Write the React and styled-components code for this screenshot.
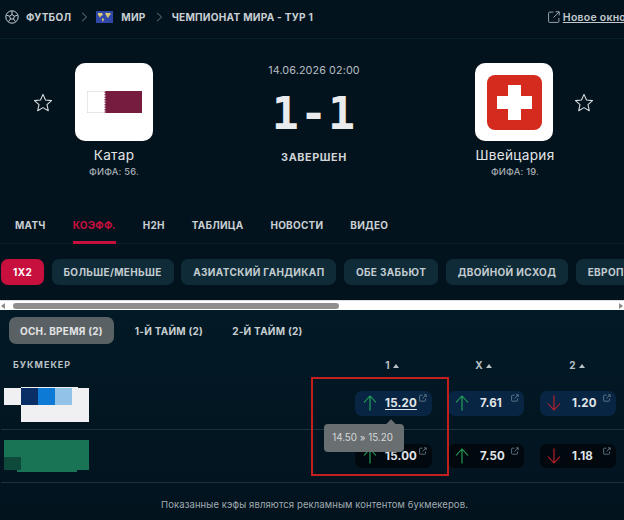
import React from "react";
import styled, { createGlobalStyle } from "styled-components";

const Global = createGlobalStyle`
  html, body { margin: 0; padding: 0; background: #02131e; }
  body { font-family: Inter, "Noto Sans", sans-serif; }
  * { box-sizing: border-box; }
`;
const Page = styled.div`
  position: relative; width: 624px; height: 520px; overflow: hidden;
  background: #02131e; color: #dfe3e6; font-family: Inter, "Noto Sans", sans-serif;
`;
const Breadcrumbs = styled.div`
  height: 39px; display: flex; align-items: center; padding: 0 0 4px 5px;
  border-bottom: 1px solid #07202c; font-size: 10.1px; font-weight: 700; letter-spacing: .25px; color: #c9cfd3; white-space: nowrap;
`;
const Crumb = styled.span`margin-left: ${p => p.$ml}px; display: flex;`;
const NewWindow = styled.a`
  margin-left: auto; display: flex; align-items: center; gap: 3px; color: #c3cace; font-size: 10.5px; font-weight: 600; margin-right: -2px;
  span { text-decoration: underline; }
`;
const Match = styled.section`
  height: 156px; display: grid; grid-template-columns: 236px 156px 232px; padding-top: 24px;
`;
const Side = styled.div`display: flex; flex-direction: column; align-items: flex-start; position: relative;`;
const TeamRow = styled.div`display: flex; align-items: center; gap: ${p => p.$right ? "21px" : "22px"}; padding-left: ${p => p.$right ? "83px" : "33px"};`;
const Logo = styled.div`
  width: 78px; height: 78px; border-radius: 10px; background: #fff; display: flex; align-items: center; justify-content: center;
`;
const TeamInfo = styled.div`
  width: 100px; margin-left: ${p => p.$ml}px; margin-top: 6px; text-align: center;
`;
const TeamName = styled.div`font-size: 13.6px; font-weight: 400; letter-spacing: .3px; line-height: 17px; color: #e2e5e7;`;
const Fifa = styled.div`font-size: 9.3px; font-weight: 500; line-height: 13px; margin-top: 1px; color: #a7aeb3; letter-spacing: .2px;`;
const Center = styled.div`display: flex; flex-direction: column; align-items: center; margin-top: 1px; width: 156px;`;
const DateText = styled.div`font-size: 10.8px; line-height: 14px; color: #b6bcc1; letter-spacing: .1px;`;
const Score = styled.div`
  font-family: "DejaVu Sans Mono", monospace; font-weight: 700; font-size: 45px; line-height: 52px; margin-top: 10px; color: #e9ebec; letter-spacing: 1px;
`;
const Status = styled.div`font-size: 10.8px; font-weight: 700; letter-spacing: .6px; line-height: 14px; margin-top: 11px; color: #cfd3d6;`;
const Tabs = styled.nav`
  height: 49px; display: flex; gap: 27px; padding: 0 0 0 15px; border-bottom: 1px solid #07202c;
`;
const Tab = styled.div`
  height: 49px; padding-top: 22px; line-height: 16px; font-size: 10px; font-weight: 700; letter-spacing: .25px;
  color: ${p => p.$active ? "#c8103f" : "#c9cfd3"};
  border-bottom: 3px solid ${p => p.$active ? "#c8103f" : "transparent"};
`;
const MarketBar = styled.div`
  display: flex; gap: 7.5px; padding: 15px 0 0 1px; height: 56px; overflow: hidden; background: #02131e;
`;
const MarketPill = styled.div`
  flex: none; height: 26px; padding: 0 12px; border-radius: 7px; display: flex; align-items: center;
  font-size: 10px; font-weight: 700; letter-spacing: .35px; white-space: nowrap;
  background: ${p => p.$active ? "#c8103f" : "#0f2b38"}; color: ${p => p.$active ? "#fff" : "#c3cbd0"};
`;
const Scrollbar = styled.div`
  height: 10px; background: #fff; display: flex; align-items: center; padding: 0 1px; gap: 2px; border-top: 1px solid #ddd;
`;
const ScrollThumb = styled.div`width: 326px; margin-left: 6px; height: 6px; border-radius: 3px; background: #8e8e8e;`;
const ArrowL = styled.i`width: 0; height: 0; border: 3px solid transparent; border-right: 4px solid #8a8a8a; border-left: 0;`;
const ArrowR = styled.i`width: 0; height: 0; border: 3px solid transparent; border-left: 4px solid #8a8a8a; border-right: 0; margin-left: auto;`;
const Lower = styled.div`height: 209px; background: linear-gradient(#02192a00, #02131e), #021a26;`;
const Periods = styled.div`display: flex; align-items: flex-start; gap: 21px; padding: 7px 0 0 9px; height: 42px;`;
const Period = styled.div`
  height: 27px; padding: 0 ${p => p.$active ? "11px" : "0"}; margin-right: ${p => p.$active ? "0" : "8px"}; border-radius: 7px; display: flex; align-items: center;
  font-size: 10px; font-weight: 700; letter-spacing: .25px; white-space: nowrap; color: ${p => p.$active ? "#e2e4e5" : "#c6cdd1"};
  background: ${p => p.$active ? "#5a6164" : "transparent"};
`;
const HeadRow = styled.div`
  display: grid; grid-template-columns: 350px 84px 99px 88px; height: 25px; align-items: center; font-size: 9px; font-weight: 700; letter-spacing: 1px; color: #b9c1c6;
`;
const HeadName = styled.div`padding-left: 13px;`;
const HeadCol = styled.div`text-align: center; letter-spacing: .3px; font-size: 10px;`;
const Row = styled.div`
  height: 53px; margin-left: 1px; border-bottom: 1px solid #1b323e; display: flex; align-items: center;
`;
const Mosaic = styled.svg`flex: none; display: block; margin: ${p => p.$m};`;
const OddsCell = styled.div`display: flex; margin-left: auto; gap: 16px; padding-right: 8px;`;
const Odd = styled.div`
  position: relative; width: ${p => p.$w || 76}px; height: ${p => p.$dark ? 24 : 25}px; border-radius: 7px; display: flex; align-items: center;
  padding-left: ${p => p.$w ? 8 : 7}px; gap: ${p => p.$w ? 8 : 11}px;
  background: ${p => p.$dark ? "#01090f" : "#082644"}; color: #e3e6e9; font-size: 11.5px; font-weight: 700; letter-spacing: .2px;
  ${p => p.$under && "span { text-decoration: underline; text-underline-offset: 2px; }"}
`;
const Ext = styled.svg`position: absolute; top: 3px; right: 5px;`;
const Note = styled.div`text-align: center; font-size: 9.5px; line-height: 14px; padding: 15px 0 0 5px; color: #a3abb0; letter-spacing: .1px;`;
const Highlight = styled.div`
  position: absolute; left: 311px; top: 377px; width: 138px; height: 99px; border: 2px solid #c41f1f; pointer-events: none;
`;
const Tooltip = styled.div`
  position: absolute; left: 324px; top: 424px; width: 80px; height: 28px; border-radius: 4px; background: #696e70; color: #d5d7d8;
  font-size: 9.8px; display: flex; align-items: center; justify-content: center; padding: 0 3px 1px 0;
  &::before { content: ""; position: absolute; left: 63px; top: -3px; width: 8px; height: 8px; background: #696e70; transform: rotate(45deg); }
`;

const ExtIcon = () => (
  <Ext width="8" height="8" viewBox="0 0 8 8" fill="none" stroke="#6f8596" strokeWidth="0.8">
    <path d="M3.5 1.2H1.4a.8.8 0 0 0-.8.8v4.4a.8.8 0 0 0 .8.8h4.4a.8.8 0 0 0 .8-.8V4.4M3.5 4.5 7.2.8M5 .8h2.2V3" />
  </Ext>
);
const Arrow = ({ up }) => (
  <svg width="14" height="16" viewBox="0 0 14 16" fill="none" stroke={up ? "#27a65a" : "#c5202c"} strokeWidth="1.1">
    {up ? <path d="M7 15.5V1M1 7.5 7 1l6 6.5" /> : <path d="M7 .5V15M1 8.5 7 15l6-6.5" />}
  </svg>
);
const Star = () => (
  <svg width="20" height="19" viewBox="0 0 20 19" fill="none" stroke="#d7dbde" strokeWidth="1.1" strokeLinejoin="round">
    <path d="M10 1.4l2.5 5.6 6 .6-4.5 4.1 1.3 6-5.3-3.1-5.3 3.1 1.3-6L1.5 7.6l6-.6z" />
  </svg>
);
const Sep = () => (
  <svg width="7" height="10" viewBox="0 0 7 10" fill="none" stroke="#76838b" strokeWidth="0.9"><path d="M1 .8 5.6 5 1 9.2" /></svg>
);
const Ball = () => (
  <svg width="14" height="14" viewBox="0 0 14 14" fill="none" stroke="#c9cfd3" strokeWidth="1">
    <circle cx="7" cy="7" r="6.2" />
    <path d="M7 4.5 9.4 6.2 8.5 9H5.5L4.6 6.2zM7 4.5V1M9.4 6.2l3.2-1M8.5 9l2 2.6M5.5 9l-2 2.6M4.6 6.2l-3.2-1" />
  </svg>
);
const WorldFlag = () => (
  <svg width="17" height="12" viewBox="0 0 17 12">
    <rect width="17" height="12" fill="#2f47a8" />
    <path d="M2 2h4l1 2-2 1-1 2-1-2-1-1zM9 2h5l1 1-2 2-1 2-1-1-1-2zM6 7l2 1-1 3-1-2z" fill="#d8c872" />
  </svg>
);
const NewIcon = () => (
  <svg width="12" height="12" viewBox="0 0 12 12" fill="none" stroke="#aab2b7" strokeWidth="0.9">
    <path d="M5.4 1.1H1.6a1 1 0 0 0-1 1v8.3a1 1 0 0 0 1 1h8.3a1 1 0 0 0 1-1V7M5.5 6.6 11.2.9M7.6.8h3.6v3.6" />
  </svg>
);
const serr = "M17 0 L19 0.8 L17 1.6 L19 2.4 L17 3.2 L19 4 L17 4.8 L19 5.6 L17 6.4 L19 7.2 L17 8 L19 8.8 L17 9.6 L19 10.4 L17 11.2 L19 12 L17 12.8 L19 13.6 L17 14.4 L19 15.2 L17 16 L19 16.8 L17 17.6 L19 18.4 L17 19.2 L19 20 L17 21 L55 21 L55 0 Z";
const Qatar = () => (
  <svg width="55" height="22" viewBox="0 0 55 21" preserveAspectRatio="none">
    <rect x="0.3" y="0.3" width="54.4" height="20.4" fill="#fff" stroke="#d9d9d9" strokeWidth="0.6" />
    <path d={serr} fill="#751c3f" />
  </svg>
);
const Swiss = () => (
  <svg width="55" height="55" viewBox="0 0 55 55">
    <rect width="55" height="55" rx="8" fill="#d52b1e" />
    <path d="M21 10h13v11h11v13H34v11H21V34H10V21h11z" fill="#fff" />
  </svg>
);
const CaretSvg = styled.svg`margin-left: 3px; vertical-align: 1px;`;
const Caret = () => (
  <CaretSvg width="6" height="4" viewBox="0 0 6 4"><path d="M3 0l3 4H0z" fill="#b9c1c6" /></CaretSvg>
);
const Mosaic1 = () => (
  <Mosaic $m="3px 0 0 3px" width="85" height="35" viewBox="0 0 85 35">
    <path d="M0 1h17V0h57v1h11v34H17V18H0z" fill="#f0f0f2" />
    <rect x="17" y="1" width="17" height="17" fill="#0a2f66" />
    <rect x="34" y="1" width="17" height="17" fill="#0d7bd6" />
    <rect x="51" y="1" width="17" height="17" fill="#93c2e8" />
  </Mosaic>
);
const Mosaic2 = () => (
  <Mosaic $m="0 0 0 3px" width="85" height="32" viewBox="0 0 85 32">
    <rect width="85" height="30" fill="#187454" />
    <rect x="13" y="29" width="60" height="3" fill="#187454" />
    <rect y="17" width="17" height="13" fill="#0e4a3c" />
  </Mosaic>
);

const markets = ["БОЛЬШЕ/МЕНЬШЕ", "АЗИАТСКИЙ ГАНДИКАП", "ОБЕ ЗАБЬЮТ", "ДВОЙНОЙ ИСХОД", "ЕВРОПЕЙСКИЙ ГАНДИКАП"];

export default function App() {
  return (
    <Page>
      <Global />
      <Breadcrumbs>
        <Ball />
        <Crumb $ml={7}>ФУТБОЛ</Crumb>
        <Crumb $ml={10}><Sep /></Crumb>
        <Crumb $ml={8}><WorldFlag /></Crumb>
        <Crumb $ml={8}>МИР</Crumb>
        <Crumb $ml={10}><Sep /></Crumb>
        <Crumb $ml={9}>ЧЕМПИОНАТ МИРА - ТУР 1</Crumb>
        <NewWindow><NewIcon /><span>Новое окно</span></NewWindow>
      </Breadcrumbs>
      <Match>
        <Side>
          <TeamRow><Star /><Logo><Qatar /></Logo></TeamRow>
          <TeamInfo $ml={64}>
            <TeamName>Катар</TeamName>
            <Fifa>ФИФА: 56.</Fifa>
          </TeamInfo>
        </Side>
        <Center>
          <DateText>14.06.2026 02:00</DateText>
          <Score>1-1</Score>
          <Status>ЗАВЕРШЕН</Status>
        </Center>
        <Side>
          <TeamRow $right><Logo><Swiss /></Logo><Star /></TeamRow>
          <TeamInfo $ml={73}>
            <TeamName>Швейцария</TeamName>
            <Fifa>ФИФА: 19.</Fifa>
          </TeamInfo>
        </Side>
      </Match>
      <Tabs>
        <Tab>МАТЧ</Tab>
        <Tab $active>КОЭФФ.</Tab>
        <Tab>H2H</Tab>
        <Tab>ТАБЛИЦА</Tab>
        <Tab>НОВОСТИ</Tab>
        <Tab>ВИДЕО</Tab>
      </Tabs>
      <MarketBar>
        <MarketPill $active>1X2</MarketPill>
        {markets.map(m => <MarketPill key={m}>{m}</MarketPill>)}
      </MarketBar>
      <Scrollbar><ArrowL /><ScrollThumb /><ArrowR /></Scrollbar>
      <Lower>
        <Periods>
          <Period $active>ОСН. ВРЕМЯ (2)</Period>
          <Period>1-Й ТАЙМ (2)</Period>
          <Period>2-Й ТАЙМ (2)</Period>
        </Periods>
        <HeadRow>
          <HeadName>БУКМЕКЕР</HeadName>
          <HeadCol>1<Caret /></HeadCol>
          <HeadCol>X<Caret /></HeadCol>
          <HeadCol>2<Caret /></HeadCol>
        </HeadRow>
        <Row>
          <Mosaic1 />
          <OddsCell>
            <Odd $w={77} $under><Arrow up /><span>15.20</span><ExtIcon /></Odd>
            <Odd><Arrow up /><span>7.61</span><ExtIcon /></Odd>
            <Odd><Arrow /><span>1.20</span><ExtIcon /></Odd>
          </OddsCell>
        </Row>
        <Row>
          <Mosaic2 />
          <OddsCell>
            <Odd $w={77} $dark><Arrow up /><span>15.00</span><ExtIcon /></Odd>
            <Odd $dark><Arrow up /><span>7.50</span><ExtIcon /></Odd>
            <Odd $dark><Arrow /><span>1.18</span><ExtIcon /></Odd>
          </OddsCell>
        </Row>
        <Note>Показанные кэфы являются рекламным контентом букмекеров.</Note>
      </Lower>
      <Highlight />
      <Tooltip>14.50 » 15.20</Tooltip>
    </Page>
  );
}
